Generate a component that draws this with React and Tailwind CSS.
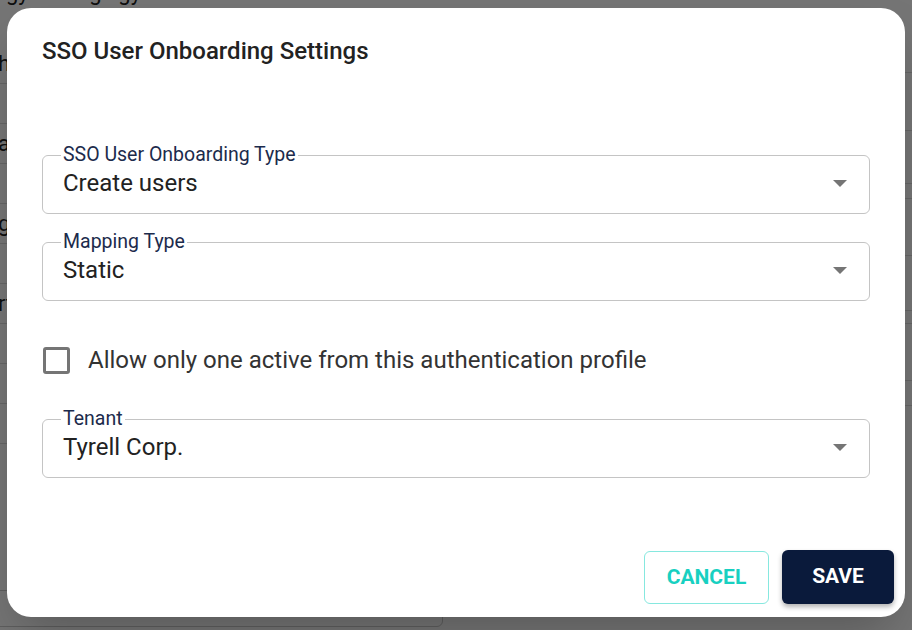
import { useState } from "react";

const font = { fontFamily: "Roboto, 'Liberation Sans', sans-serif" };

function ArrowDown() {
  return (
    <svg width="14" height="7" viewBox="0 0 14 7" className="shrink-0">
      <polygon points="0,0 14,0 7,7" fill="#757575" />
    </svg>
  );
}

function SelectField({ label, value, className = "" }) {
  return (
    <fieldset
      className={`border border-[#c4c4c4] rounded-[6px] pl-[20px] pr-[22px] pb-[16px] ${className}`}
    >
      <legend className="ml-[-2px] px-[2px] text-[19.5px] leading-[20px] text-[#1c2b4c]">
        {label}
      </legend>
      <div className="flex items-center justify-between pt-[4px]">
        <span className="text-[24px] leading-[28px] text-[#222]">{value}</span>
        <ArrowDown />
      </div>
    </fieldset>
  );
}

export default function App() {
  const [checked, setChecked] = useState(false);

  // rows of the page that sits behind the dialog
  const leftRows = ["hr", "", "av", "", "gr", "", "rt", "", "", ""];
  const rightRows = [72, 130, 183, 198, 255, 310, 323, 380, 405];

  return (
    <div className="relative w-[912px] h-[630px] overflow-hidden bg-white" style={font}>
      {/* Page behind */}
      <div className="absolute inset-0 text-[22px] text-[#222]">
        <div className="mt-[-24px] ml-[6px]">gy settings gy account</div>
        <div className="ml-[-2px] mt-[35px]">
          {leftRows.map((r, i) => (
            <div key={i} className="h-[40px] w-[600px] border-b border-[#ddd] leading-[40px]">
              {r}
            </div>
          ))}
        </div>
        {rightRows.map((y) => (
          <div
            key={y}
            className="absolute right-0 w-[300px] border-b border-[#ddd]"
            style={{ top: y }}
          />
        ))}
        <div className="absolute left-[-10px] top-[590px] w-[453px] h-[37px] border border-[#ccc] rounded-[6px]" />
      </div>

      {/* Backdrop + dialog */}
      <div className="absolute inset-0 bg-black/[0.54] flex justify-center pt-[8px]">
        <div className="w-[898px] h-[609px] rounded-[24px] bg-white px-[35px] pt-[29px] flex flex-col shadow-2xl">
          <h2 className="h-[28px] text-[24px] leading-[28px] font-medium text-[#222]">
            SSO User Onboarding Settings
          </h2>

          <SelectField className="mt-[80px]" label="SSO User Onboarding Type" value="Create users" />
          <SelectField className="mt-[18px]" label="Mapping Type" value="Static" />

          <label className="mt-[39px] h-[40px] flex items-center gap-[18px] cursor-pointer">
            <input
              type="checkbox"
              className="sr-only"
              checked={checked}
              onChange={(e) => setChecked(e.target.checked)}
            />
            <span className="ml-[1px] w-[27px] h-[27px] rounded-[3px] border-[3px] border-[#757575] flex items-center justify-center">
              {checked && <span className="w-[13px] h-[13px] bg-[#757575]" />}
            </span>
            <span className="text-[24px] leading-[28px] text-[#333]">
              Allow only one active from this authentication profile
            </span>
          </label>

          <SelectField className="mt-[29px]" label="Tenant" value="Tyrell Corp." />

          <div className="mt-[72px] mr-[-24px] flex justify-end gap-[13px]">
            <button className="mt-[1px] w-[125px] h-[53px] rounded-[6px] border border-[#86e8df] text-[21px] font-bold text-[#18d0c1] bg-white">
              CANCEL
            </button>
            <button className="w-[112px] h-[54px] rounded-[6px] bg-[#0a1a3b] text-[21px] font-bold text-white shadow-[0_3px_5px_rgba(0,0,0,0.3)]">
              SAVE
            </button>
          </div>
        </div>
      </div>
    </div>
  );
}
